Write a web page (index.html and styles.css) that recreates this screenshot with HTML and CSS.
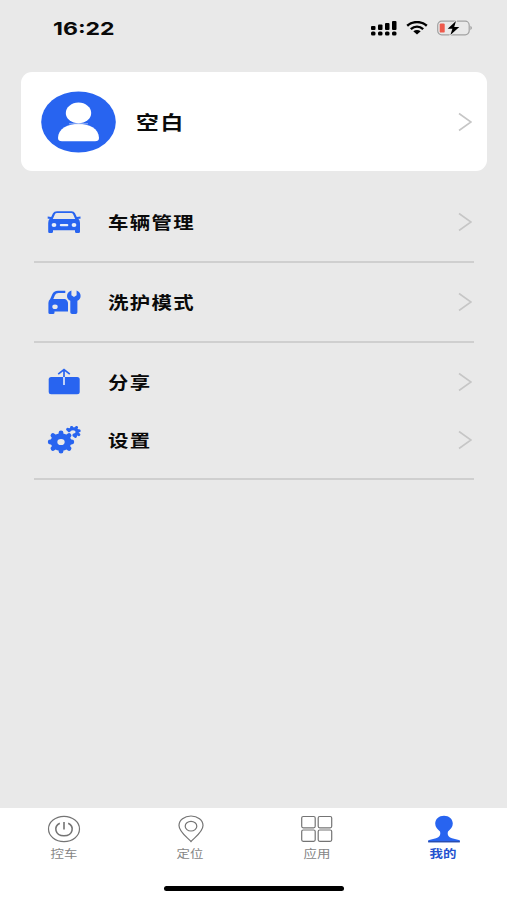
FILE: index.html
```html
<!DOCTYPE html>
<html lang="zh-CN">
<head>
    <meta charset="UTF-8">
    <meta name="viewport" content="width=device-width, initial-scale=1.0">
    <title>我的</title>
    <link rel="stylesheet" href="styles.css">
</head>
<body>
    <header class="status-bar">
        <span class="time">16:22</span>
        <div class="status-icons">
            <svg width="27" height="16" viewBox="0 0 27 16">
                <rect x="1" y="6" width="4.5" height="4" rx="1"/>
                <rect x="8" y="4.5" width="4.5" height="5.5" rx="1"/>
                <rect x="15" y="3" width="4.5" height="7" rx="1"/>
                <rect x="22" y="1" width="4.5" height="9" rx="1"/>
                <rect x="1" y="11.5" width="4.5" height="4" rx="1.5"/>
                <rect x="8" y="11.5" width="4.5" height="4" rx="1.5"/>
                <rect x="15" y="11.5" width="4.5" height="4" rx="1.5"/>
                <rect x="22" y="11.5" width="4.5" height="4" rx="1.5"/>
            </svg>
            <svg class="wifi" width="22" height="14" viewBox="0 0 22 14">
                <path d="M1.2 4.7C7 -.1 15 -.1 20.8 4.7M4.8 8.1C8.5 5 13.5 5 17.2 8.1" fill="none" stroke="#000" stroke-width="2.5"/>
                <path d="M7.3 10.2Q11 7.7 14.7 10.2L11 13.5Z"/>
            </svg>
            <svg class="battery" width="36" height="16" viewBox="0 0 36 16">
                <rect x=".7" y="1.2" width="31.5" height="13.6" rx="4" fill="none" stroke="#a2a2a2" stroke-width="1.2"/>
                <path d="M33.5 5.8Q36 8 33.5 10.2Z" fill="#8e8e8e"/>
                <rect x="2.7" y="3.4" width="5" height="9.2" rx="1.2" fill="#ee5a4c"/>
                <path d="M19 1L10.7 8.8H15.4L13.4 15L22.3 7H17.2Z" stroke="#e9e9e9" stroke-width="1.6" paint-order="stroke"/>
            </svg>
        </div>
    </header>

    <main>
        <a class="profile">
            <svg width="75" height="62" viewBox="0 0 75 62">
                <ellipse cx="37.5" cy="31" rx="37.3" ry="30.6" fill="#2864f0"/>
                <ellipse cx="37.5" cy="22" rx="12.7" ry="10.4" fill="#fff"/>
                <path d="M17 47C17 28 58 28 58 47Q58 50.3 54 50.3H21Q17 50.3 17 47Z" fill="#fff"/>
                <path d="M28 32.8H47" stroke="#b9cbf8" stroke-width=".8"/>
            </svg>
            <span class="name">空白</span>
            <svg class="arrow" width="14" height="20" viewBox="0 0 14 20"><path d="M1 1.5L13 10L1 18.5"/></svg>
        </a>

        <nav class="menu">
            <a class="item line">
                <svg class="icon" width="34" height="28" viewBox="0 0 34 28">
                    <path fill-rule="evenodd" d="M10 3.2H24.5Q27 3.2 28 5.2L29.8 9.1L33.5 8.6V10.8H31.3Q33 12.3 33 15V23.7Q33 25 31.5 25H29.5Q28 25 28 23.7V22.3H6V23.7Q6 25 4.5 25H2.5Q1.2 25 1.2 23.7V15Q1.2 12.3 2.7 10.8H.7V8.6L4.2 9.1L6 5.2Q7 3.2 10 3.2ZM9.8 5.1Q8.5 5.1 7.9 6.2L5.8 11H28.2L26.1 6.2Q25.5 5.1 24.2 5.1Z"/>
                    <g fill="#e9eefa">
                        <ellipse cx="7" cy="17" rx="2.4" ry="2"/>
                        <ellipse cx="27" cy="17" rx="2.4" ry="2"/>
                        <rect x="12.8" y="15.9" width="8.5" height="2.3" rx="1"/>
                    </g>
                </svg>
                <span class="label">车辆管理</span>
                <svg class="arrow" width="14" height="20" viewBox="0 0 14 20"><path d="M1 1.5L13 10L1 18.5"/></svg>
            </a>
            <a class="item line">
                <svg class="icon" width="34" height="28" viewBox="0 0 34 28">
                    <path fill-rule="evenodd" d="M18.3 2.7V4.9H11.5Q9 4.9 8 7L6.3 11H18Q21 12.5 21 15.5V23.5H7.5V24.8Q7.5 26 6 26H3Q1.4 26 1.4 24.7V15Q1.4 12.5 3.2 11L5.3 6.2Q6.7 2.7 11 2.7ZM8 16.5A2.7 2.3 0 1 0 8 21.1A2.7 2.3 0 1 0 8 16.5Z"/>
                    <path d="M24.4 2.4V7.2L27 9L29.6 7.2V2.4Q33.6 4.2 33.6 7.9Q33.6 11 30.4 12.8V24.3Q30.4 26 28.7 26H25.1Q23.3 26 23.3 24.3V12.8Q20 11 20 7.9Q20 4.2 24.4 2.4Z"/>
                </svg>
                <span class="label">洗护模式</span>
                <svg class="arrow" width="14" height="20" viewBox="0 0 14 20"><path d="M1 1.5L13 10L1 18.5"/></svg>
            </a>
            <a class="item first">
                <svg class="icon" width="34" height="28" viewBox="0 0 34 28">
                    <rect x="1.7" y="9" width="31" height="17.3" rx="2.5"/>
                    <path d="M17 9V2M11.2 6.2L17 1.6L22.8 6.2" fill="none" stroke="#2864f0" stroke-width="1.7"/>
                    <path d="M17 9V17" stroke="#dbe5fa" stroke-width="1.7"/>
                </svg>
                <span class="label">分享</span>
                <svg class="arrow" width="14" height="20" viewBox="0 0 14 20"><path d="M1 1.5L13 10L1 18.5"/></svg>
            </a>
            <a class="item last">
                <svg class="icon" width="34" height="28" viewBox="0 0 34 28">
                    <g stroke="#2864f0" stroke-linecap="round">
                        <path d="M21.5 3.8L20.7 3.3M24.6 2V1.4M29 2.2L29.5 1.5M31.3 4.8H32.2M31 8L31.8 8.6M28 9.8L28.4 10.4" stroke-width="3"/>
                        <path d="M22 4.5Q24 2.5 27 2.8Q30.5 3.5 30.2 6.3Q29.8 8.8 27 9.2" fill="none" stroke-width="3.2"/>
                        <path d="M14 6.8V25.2M3.2 16H24.8M6 9.6L22 22.4M22 9.6L6 22.4" stroke-width="4.8"/>
                    </g>
                    <ellipse cx="14" cy="16" rx="10.4" ry="8.7"/>
                    <ellipse cx="14" cy="16" rx="3.7" ry="3.1" fill="#e9e9e9"/>
                </svg>
                <span class="label">设置</span>
                <svg class="arrow" width="14" height="20" viewBox="0 0 14 20"><path d="M1 1.5L13 10L1 18.5"/></svg>
            </a>
        </nav>
    </main>

    <footer>
        <nav class="tabs">
            <a class="tab">
                <svg width="34" height="28" viewBox="0 0 34 28">
                    <ellipse cx="17" cy="14" rx="15.5" ry="12.6"/>
                    <path d="M12.8 8.2C6.5 11.2 7.6 20.7 17 20.7S27.5 11.2 21.2 8.2M17 7V14.5" stroke-width="1.6"/>
                </svg>
                <span>控车</span>
            </a>
            <a class="tab">
                <svg width="34" height="28" viewBox="0 0 34 28">
                    <path d="M17 26.5C13.5 22.5 5 17 5 10.5C5 5 10.4 1 17 1S29 5 29 10.5C29 17 20.5 22.5 17 26.5Z"/>
                    <ellipse cx="17" cy="11.2" rx="5.8" ry="4.8"/>
                </svg>
                <span>定位</span>
            </a>
            <a class="tab">
                <svg width="34" height="28" viewBox="0 0 34 28">
                    <rect x="1.7" y="1.5" width="13.5" height="11.3" rx="1.5"/>
                    <rect x="18.2" y="1.5" width="13.5" height="11.3" rx="1.5"/>
                    <rect x="1.7" y="15" width="13.5" height="11.3" rx="1.5"/>
                    <rect x="18.2" y="15" width="13.5" height="11.3" rx="1.5"/>
                </svg>
                <span>应用</span>
            </a>
            <a class="tab active">
                <svg width="34" height="28" viewBox="0 0 34 28">
                    <path d="M17 .7C22 .7 25.8 4 25.8 8.5C25.8 12 23.5 14.2 21 16.5C20 20 21.5 22 25 23.2L32.8 25.3V27.3H1.2V25.3L9 23.2C12.5 22 14 20 13 16.5C10.5 14.2 8.2 12 8.2 8.5C8.2 4 12 .7 17 .7Z"/>
                    <path class="base" d="M1.2 26.7H32.8"/>
                </svg>
                <span>我的</span>
            </a>
        </nav>
        <div class="home-bar"></div>
    </footer>
</body>
</html>
```
FILE: styles.css
```css
* {
    margin: 0;
    padding: 0;
    box-sizing: border-box;
}
body {
    font-family: "Liberation Sans", "Noto Sans CJK SC", sans-serif;
    background-color: #e9e9e9;
    color: #0a0a0a;
    height: 900px;
    display: flex;
    flex-direction: column;
    overflow: hidden;
}
svg {
    display: block;
    flex-shrink: 0;
}
.status-bar {
    height: 56px;
    padding: 0 34px 0 53px;
    display: flex;
    align-items: center;
    justify-content: space-between;
}
.time {
    font-family: Inter, sans-serif;
    font-size: 18px;
    font-weight: 700;
    transform: scaleX(1.28);
    transform-origin: left;
}
.status-icons {
    display: flex;
    align-items: center;
}
.wifi {
    margin-left: 9px;
}
.battery {
    margin-left: 9px;
}
main {
    flex-grow: 1;
    padding: 16px 20px 0 21px;
}
.profile {
    height: 99px;
    padding: 0 15px 0 20px;
    background: white;
    border-radius: 11px;
    display: flex;
    align-items: center;
}
.name {
    font-size: 19px;
    font-weight: 700;
    letter-spacing: 1.5px;
    margin-left: 20px;
    transform: scaleX(1.2);
    transform-origin: left;
}
.arrow {
    margin-left: auto;
    fill: none;
    stroke: #c6c6c6;
    stroke-width: 1.6;
}
.menu {
    padding: 12px 13px 0 13px;
}
.item {
    height: 80px;
    padding: 0 2px 0 13px;
    display: flex;
    align-items: center;
}
.line, .last {
    border-bottom: 2px solid #cfcfcf;
}
.first {
    height: 68px;
    padding-top: 10px;
}
.last {
    height: 69px;
    padding-bottom: 9px;
}
.icon {
    fill: #2864f0;
}
.label {
    font-size: 17px;
    font-weight: 700;
    letter-spacing: 1.1px;
    margin-left: 27px;
    padding-bottom: 2px;
    transform: scaleX(1.2);
    transform-origin: left;
}
footer {
    height: 92px;
    background: white;
}
.tabs {
    display: flex;
    padding: 7px 0 0 1px;
}
.tab {
    flex: 1;
    display: flex;
    flex-direction: column;
    align-items: center;
    color: #858585;
    font-size: 11px;
    line-height: 16px;
}
.tab svg {
    fill: none;
    stroke: #747474;
    stroke-width: 1.2;
}
.tab span {
    margin: 3px 1px 0 0;
    transform: scaleX(1.22);
}
.tab.active {
    color: #2452cf;
    font-weight: 700;
}
.tab.active svg {
    fill: #2864f0;
    stroke: none;
}
.tab .base {
    stroke: #2b4ba5;
}
.home-bar {
    width: 180px;
    height: 5px;
    margin: 24px auto 0;
    background: black;
    border-radius: 3px;
}
```
